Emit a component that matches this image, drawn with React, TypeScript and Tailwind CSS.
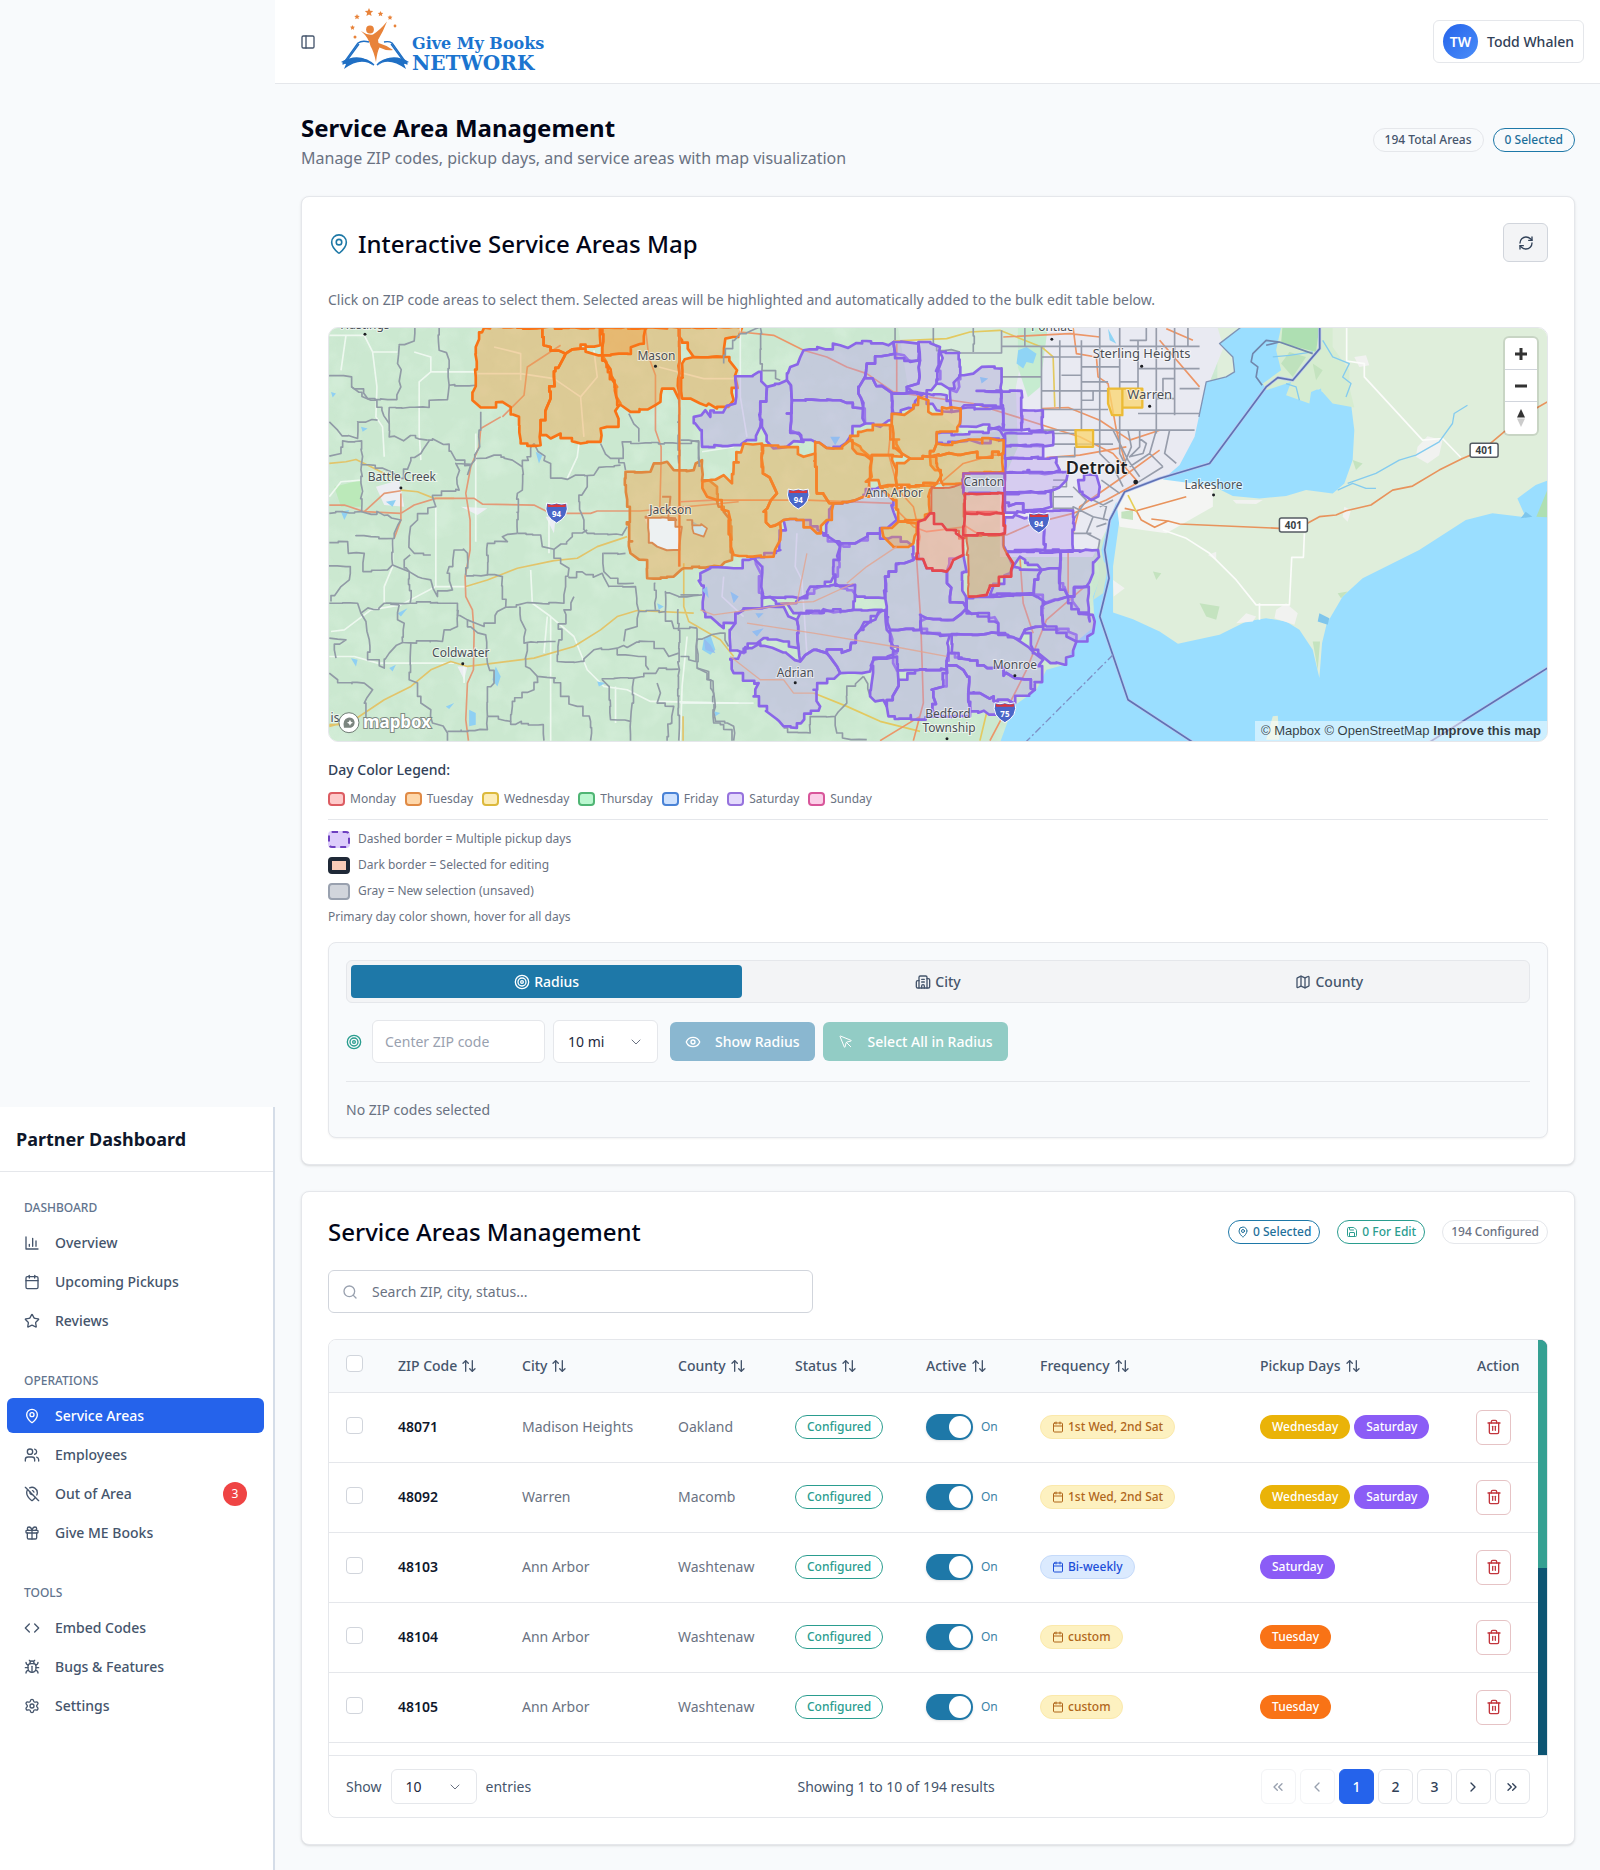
import { useState } from "react";
import type { ElementType, ReactNode } from "react";
import {
    ArrowUpDown,
    Bug,
    Building2,
    Calendar,
    ChevronDown,
    ChevronLeft,
    ChevronRight,
    ChevronsLeft,
    ChevronsRight,
    Code,
    Eye,
    Gift,
    Map as MapIcon,
    MapPin,
    MapPinOff,
    MousePointer,
    PanelLeft,
    RefreshCw,
    Save,
    Search,
    Settings,
    Star,
    Target,
    Trash2,
    Users,
} from "lucide-react";

function ChartIcon({ className }: { className?: string }) {
    return (
        <svg
            viewBox="0 0 24 24"
            fill="none"
            stroke="currentColor"
            strokeWidth="2"
            strokeLinecap="round"
            strokeLinejoin="round"
            className={className}
        >
            <path d="M3 3v18h18M18 17V9M13 17V5M8 17v-3" />
        </svg>
    );
}

interface NavItem {
    label: string;
    icon: ElementType;
    active?: boolean;
    badge?: number;
}

const navGroups: { title: string; items: NavItem[] }[] = [
    {
        title: "Dashboard",
        items: [
            { label: "Overview", icon: ChartIcon },
            { label: "Upcoming Pickups", icon: Calendar },
            { label: "Reviews", icon: Star },
        ],
    },
    {
        title: "Operations",
        items: [
            { label: "Service Areas", icon: MapPin, active: true },
            { label: "Employees", icon: Users },
            { label: "Out of Area", icon: MapPinOff, badge: 3 },
            { label: "Give ME Books", icon: Gift },
        ],
    },
    {
        title: "Tools",
        items: [
            { label: "Embed Codes", icon: Code },
            { label: "Bugs & Features", icon: Bug },
            { label: "Settings", icon: Settings },
        ],
    },
];

const legendDays = [
    { day: "Monday", swatch: "bg-[#fecaca] border-[#dc5c62]" },
    { day: "Tuesday", swatch: "bg-[#fed7aa] border-[#e08a45]" },
    { day: "Wednesday", swatch: "bg-[#fdedb8] border-[#dcb93c]" },
    { day: "Thursday", swatch: "bg-[#bbf7d0] border-[#4fb574]" },
    { day: "Friday", swatch: "bg-[#cfe2fe] border-[#4a83d6]" },
    { day: "Saturday", swatch: "bg-[#e4dafc] border-[#9672dd]" },
    { day: "Sunday", swatch: "bg-[#fbcfe8] border-[#d8569a]" },
];

const dayColors: Record<string, string> = {
    Tuesday: "bg-[#f97316]",
    Wednesday: "bg-[#eab308]",
    Saturday: "bg-[#8b5cf6]",
};

const areas = [
    { zip: "48071", city: "Madison Heights", county: "Oakland", frequency: "1st Wed, 2nd Sat", days: ["Wednesday", "Saturday"] },
    { zip: "48092", city: "Warren", county: "Macomb", frequency: "1st Wed, 2nd Sat", days: ["Wednesday", "Saturday"] },
    { zip: "48103", city: "Ann Arbor", county: "Washtenaw", frequency: "Bi-weekly", days: ["Saturday"] },
    { zip: "48104", city: "Ann Arbor", county: "Washtenaw", frequency: "custom", days: ["Tuesday"] },
    { zip: "48105", city: "Ann Arbor", county: "Washtenaw", frequency: "custom", days: ["Tuesday"] },
];

const columns = [
    { label: "ZIP Code", width: "w-[124px]" },
    { label: "City", width: "w-[156px]" },
    { label: "County", width: "w-[117px]" },
    { label: "Status", width: "w-[131px]" },
    { label: "Active", width: "w-[114px]" },
    { label: "Frequency", width: "w-[220px]" },
    { label: "Pickup Days", width: "w-[217px]" },
];

/* ---------- map ---------- */

type Pt = [number, number];

function parse(points: string): Pt[] {
    return points.split(" ").map((p) => p.split(",").map(Number) as Pt);
}

function noise(a: number, b: number, i: number) {
    const v = Math.sin(a * 12.9898 + b * 78.233 + i * 37.719) * 43758.5453;
    return v - Math.floor(v) - 0.5;
}

// Turns a rough outline into the stepped line of a ZIP boundary. An edge gives
// the same steps in both directions, so neighbours share their border.
function jag(points: string, close = false, amp = 20, step = 19) {
    const pts = parse(points);
    if (close) pts.push(pts[0]);
    let d = `M${pts[0][0]},${pts[0][1]}`;
    for (let i = 1; i < pts.length; i++) {
        let a = pts[i - 1];
        let b = pts[i];
        const flip = a[0] > b[0] || (a[0] === b[0] && a[1] > b[1]);
        if (flip) [a, b] = [b, a];
        const len = Math.hypot(b[0] - a[0], b[1] - a[1]);
        const straight = Math.abs(b[0] - a[0]) < 8 || Math.abs(b[1] - a[1]) < 8;
        const size = straight ? amp / 3 : amp;
        const n = Math.floor(len / step);
        const out: Pt[] = [a];
        let prev = a;
        for (let k = 1; k < n; k++) {
            const t = k / n;
            const x = Math.round(a[0] + (b[0] - a[0]) * t + noise(a[0], b[1], k) * size);
            const y = Math.round(a[1] + (b[1] - a[1]) * t + noise(a[1], b[0], k + 9) * size);
            if (noise(x, y, k) > -0.15) out.push(noise(x, y, k) > 0.18 ? [x, prev[1]] : [prev[0], y]);
            out.push([x, y]);
            prev = [x, y];
        }
        out.push(b);
        if (flip) out.reverse();
        d += out.map((p) => `L${p[0]},${p[1]}`).join("");
    }
    return close ? d + "Z" : d;
}

const westBorders = [
    "235,75 230,130 240,200 200,238 140,235 92,200 92,170 25,165",
    "235,75 280,62 280,20",
    "355,20 355,90 385,120 385,195 465,195",
    "92,200 150,240 205,310 205,350 320,360",
    "385,195 380,238 325,240 325,262 205,262 205,310",
    "320,360 385,372 405,420 450,435 440,465",
    "25,305 50,330 110,355 110,305 170,300",
    "25,408 60,400 65,362 122,362 122,430 210,455 240,475 300,400 325,362",
    "122,430 122,575 200,585 240,600 220,655 150,650 105,645",
    "25,580 122,575",
    "480,275 475,330 462,420 405,430 415,510 335,530 345,560 290,600 265,650 280,700 330,705",
    "465,415 520,405 575,420 605,440 605,510 590,520 590,640",
    "605,440 640,370",
    "640,370 690,430 690,470 740,478 765,465 820,465 835,442 900,435",
    "840,370 870,415 895,415 905,365 975,368 1075,370 1135,362 1135,440",
    "925,280 955,325 955,365",
    "895,415 915,450",
    "800,465 800,500 775,545 790,600 800,640 905,645 920,620",
    "590,640 545,650 560,665 500,670 500,765 435,768",
    "590,640 660,645 665,680 700,688 755,650 800,630",
    "700,688 700,715 745,745 735,800 730,850 620,848 555,862 545,770 500,765",
    "745,770 845,760 865,800 945,800 955,875",
    "760,830 730,870 715,960 710,1025 780,1025 820,990 890,985",
    "850,700 850,755 870,775 940,790",
    "850,700 915,700",
    "25,668 80,665 82,700 130,700 128,755 200,750 215,735 215,655",
    "215,735 265,755 268,850 195,850",
    "268,705 250,720 265,755 330,780 350,830 395,810 385,740 400,690 440,700 435,765",
    "25,735 75,740 85,780 60,800 30,845",
    "25,850 110,850 120,880 190,850 235,855",
    "235,855 230,900 250,910 245,968 365,965 370,930 410,920 410,850 350,848 268,850",
    "120,880 135,905 145,960 140,1020 190,1045 205,1000 245,968",
    "410,870 440,900 490,920 530,875 555,862",
    "440,900 495,945 500,1030 520,1090 500,1130 500,1190",
    "595,862 600,900 615,930 610,970 705,965",
    "620,970 615,1040 650,1070 705,1075",
    "25,955 75,960 40,990 45,1015",
    "25,1060 50,1080 130,1090 155,1110 130,1150 135,1200",
    "270,970 265,1080 290,1090 300,1150 330,1170 335,1210 380,1240 380,1263",
    "500,1190 500,1230 380,1235",
    "500,1190 570,1205 575,1160 640,1110 650,1070",
    "570,1205 665,1215 670,1263",
    "705,1075 720,1130 770,1160 810,1205 810,1263",
    "845,1080 865,1100 870,1200 930,1205 930,1263",
    "845,1080 940,1075 1015,1045 1075,1048",
    "940,1075 935,1150 930,1205",
    "890,985 890,1005 955,1010 985,1050",
    "910,965 915,930 950,920 955,875",
    "890,985 985,965 1045,1010 1075,1000",
    "955,875 1035,875 1035,815 1075,830 1145,825",
    "1035,875 1060,925 1130,925",
    "1075,870 1075,1263",
    "1010,1090 1020,1120 1010,1150 1060,1160 1040,1263",
    "1130,925 1130,1045 1165,1055 1180,1130 1180,1210 1235,1230 1235,1263",
    "1075,205 1075,430",
    "1005,790 1005,870",
];

const midBorders = [
    "130,130 180,40 240,20",
    "240,20 245,150 300,180",
    "0,360 55,365 58,440",
    "0,825 55,825",
    "0,1010 45,1025 50,960 120,940 145,980",
    "50,1045 80,1060 100,1120 105,1200 160,1220 160,1263",
    "310,1225 390,1240 390,1190 465,1190 500,1150 500,1110 550,1070",
    "465,1190 470,1240 560,1260",
    "550,1070 570,1130 620,1160",
    "760,20 770,80 840,95",
    "880,20 880,95",
    "645,60 645,20",
];

const detroitGrid =
    "M838,98H965V30M965,78H1560M965,140V170H1085M1035,20V78M1085,78V330M1085,110H1205M1085,212H1290M1140,60V265M1205,60V330H1340M1260,20V400M1320,20V205M1320,285V400L1340,440M1375,60V205M1430,20V205M1375,280H1560M1430,205V340M1085,330H1545M1485,20V205M1525,20V80M1400,20V60H1350M1205,140H1320M1375,145H1560M1145,165H1205V185H1285M1320,185H1375M1450,175H1485V235H1450ZM1430,235H1485V285M1500,205H1560M1085,268H1285M1240,212V240H1205M1120,340H1185M1120,372H1300M1240,330V380M1185,380V410H1130M1260,400L1300,440 1330,500M1300,330L1345,420 1380,470M1345,330L1355,380 1330,440M1380,330V380L1350,410 1390,400 1400,370 1380,355M1430,330L1410,400 1450,440M1470,330L1455,400 1490,430M1410,400L1350,440M1450,440L1370,490M1120,480H1160V500H1120V565H1180M1180,500L1220,540 1180,600M1120,530H1180M1265,480L1320,520M1180,600V560L1240,590 1220,640 1260,660 1255,690M1180,640H1235M1260,560L1300,540M1240,590L1285,600M1180,690H1255M1240,540L1280,560 1270,600M1250,620L1280,610";

const orangeAreas = [
    "490,22 665,22 665,50 690,80 735,100 700,170 690,235 660,300 660,375 600,360 595,290 545,245 480,262 455,240 465,170 465,80",
    "665,22 840,22 840,75 780,85 735,100 690,80 665,50",
    "735,100 780,85 845,105 890,200 900,250 880,320 840,325 840,365 780,370 720,340 690,355 660,330 660,300 690,235 700,170",
    "845,22 1075,22 1075,235 1060,205 1025,205 1020,245 930,275 890,240 880,180 845,105",
    "845,22 975,22 970,70 895,100 845,105",
    "1075,22 1265,22 1255,50 1215,55 1210,110 1120,110 1085,60",
    "1120,110 1210,110 1250,150 1240,240 1190,265 1110,235 1085,235 1085,130",
];

const midOrange = [
    "190,370 245,370 248,460 290,520 250,575 270,620 300,610 300,660 280,710 160,705 150,600 110,540 80,530 65,485 130,465 155,490 160,440",
    "245,375 320,380 370,410 405,400 410,520 460,550 440,600 410,640 370,600 310,600 270,620 250,575 290,520 248,460",
    "405,365 405,400 410,520 460,550 550,530 575,470 570,410 510,360 460,385",
    "510,360 560,330 630,315 665,400 665,410 620,405 575,420 530,400",
    "635,300 700,265 715,230 745,240 745,275 840,265 840,310 770,340 770,370 750,410 690,415 665,400 640,360",
    "770,370 970,360 970,400 750,410",
    "750,410 970,400 970,455 850,460 850,490 790,495 765,450",
    "575,420 620,405 650,450 650,500 600,500 570,465",
    "650,450 690,415 750,410 785,465 770,490 650,500",
    "600,500 770,490 745,530 750,580 715,600 655,605 640,540",
    "605,625 655,605 710,610 700,670 640,680 610,650",
];

const purpleAreas = [
    "40,290 75,270 90,290 165,250 165,180 235,155 260,200 240,260 240,320 200,360 160,375 65,380 60,330",
    "260,200 320,180 335,240 320,280 330,330 370,365 320,380 280,385 245,320 240,260",
    "370,90 480,75 640,65 645,100 560,130 555,170 535,220 550,265 480,240 420,240 335,240 320,180 330,140",
    "335,240 420,240 480,240 550,265 555,310 510,350 460,385 405,365 330,330 320,280",
    "555,170 560,130 645,100 690,125 720,120 715,190 680,200 730,220 635,218",
    "535,220 555,170 635,218 635,300 600,320 555,310",
    "640,65 715,70 715,120 645,100",
    "715,65 780,80 770,190 740,220 680,200 715,190 720,120",
    "780,95 838,98 838,200 830,215 770,190",
    "635,218 730,220 700,265 640,280",
    "740,220 800,225 815,275 770,270 740,245",
    "838,170 880,160 905,140 965,145 965,260 885,255 815,275 810,225",
    "840,265 970,265 970,330 890,320 840,310",
    "890,212 1025,212 1025,330 970,330 965,215",
    "1025,270 1088,270 1088,330 1025,330",
    "770,340 960,330 975,355 770,370",
    "975,340 1120,335 1120,375 975,378",
    "975,378 1090,375 1090,412 975,415",
    "975,415 1130,412 1140,450 975,458",
    "850,460 975,460 975,520 850,520",
    "975,458 1165,455 1160,480 1095,515 975,520",
    "975,520 1115,515 1115,560 1060,570 975,548",
    "975,548 1060,570 1180,572 1180,690 1095,690 1095,575 975,578",
    "1195,480 1250,465 1260,500 1235,540 1200,515",
    "460,550 550,530 600,500 640,540 650,600 600,640 490,680 430,640",
    "310,600 370,600 430,640 480,680 460,770 360,835 250,830 225,715 300,690",
    "60,760 90,745 160,745 220,715 245,740 245,865 190,870 165,910 130,925 75,880",
    "480,680 600,640 700,680 700,720 615,770 615,835 530,830 465,790 460,720",
    "245,835 320,850 360,835 390,800 525,795 520,870 340,880 320,850",
    "165,910 190,870 245,865 310,860 350,900 355,985 250,955 190,1000 150,980 150,930",
    "350,900 360,880 520,870 605,870 540,930 510,990 440,1000 400,990 360,1025 355,985",
    "150,1020 240,970 360,1025 400,990 440,1000 480,1060 400,1110 420,1160 350,1225 310,1220 220,1130 235,1090 160,1060",
    "440,1000 510,990 540,930 615,870 620,930 650,1000 580,1020 570,1055 480,1060",
    "615,770 700,720 715,700 740,745 800,755 810,830 860,865 820,900 740,895 720,930 630,930 620,860",
    "630,930 720,930 810,945 800,1050 720,1050 650,1050 640,980",
    "580,1020 650,1010 655,1080 620,1160 570,1130",
    "655,1080 720,1050 800,1050 790,1100 755,1110 770,1190 720,1200 625,1190 620,1160",
    "800,1040 850,1050 865,1120 870,1190 770,1190 755,1110 790,1100",
    "720,885 740,895 820,900 860,865 955,910 955,940 810,945 725,940",
    "860,835 960,830 1085,825 1090,920 1035,930 1020,960 955,940 955,910 860,870",
    "815,945 955,940 1020,965 1090,1020 1065,1110 1005,1075 870,1020 815,1000",
    "805,1000 870,1020 1005,1075 1065,1110 1000,1150 865,1120 850,1050 800,1040",
    "865,1120 1000,1150 985,1190 870,1175",
    "1035,930 1090,920 1190,945 1190,965 1155,1035 1100,1020 1060,990",
    "1085,860 1120,840 1165,830 1245,905 1240,940 1190,965 1130,920 1090,910",
    "975,600 1095,575 1095,690 1050,690 980,695 970,640",
    "980,695 1140,695 1140,745 1085,750 1020,710 1000,740",
    "1000,740 1085,750 1050,820 930,825 940,800 990,760",
    "1085,750 1140,745 1165,830 1100,850 1050,820",
    "1140,695 1255,690 1240,760 1220,800 1165,830 1140,770",
    "800,755 850,705 858,830 860,865 810,830",
    "1225,800 1230,905 1165,830",
];

const redAreas = [
    "715,605 750,580 800,630 850,655 850,705 820,720 800,755 740,745 710,700",
    "855,578 970,580 975,640 850,645",
    "855,520 970,520 970,580 855,580",
];

const mixedAreas = [
    "860,645 970,645 980,700 1000,730 980,770 930,800 920,825 865,830",
    "755,500 850,490 855,655 800,630 750,580",
];

function Shield({ x, y, label }: { x: number; y: number; label: string }) {
    return (
        <g transform={`translate(${x} ${y})`}>
            <path
                d="M-10,-9 Q-5,-7 0,-9 Q5,-7 10,-9 Q12,-3 9,3 Q6,8 0,11 Q-6,8 -9,3 Q-12,-3 -10,-9Z"
                fill="#4a66c8"
                stroke="#fff"
                strokeWidth="1"
            />
            <path d="M-9,-8 Q-5,-6 0,-8 Q5,-6 9,-8 V-5 H-9Z" fill="#d8383f" />
            <text y="5" textAnchor="middle" fontSize="8" fontWeight="700" fill="#fff">
                {label}
            </text>
        </g>
    );
}

function RouteSign({ x, y }: { x: number; y: number }) {
    return (
        <g transform={`translate(${x} ${y})`}>
            <rect x="-14" y="-7" width="28" height="14" rx="2" fill="#fff" stroke="#555b63" strokeWidth="1.5" />
            <text y="4" textAnchor="middle" fontSize="10" fontWeight="700" fill="#3a3f45">
                401
            </text>
        </g>
    );
}

function Place({
    x,
    y,
    dot,
    size = 12,
    bold,
    children,
}: {
    x: number;
    y: number;
    dot?: Pt;
    size?: number;
    bold?: boolean;
    children: ReactNode;
}) {
    return (
        <g>
            <text
                x={x}
                y={y}
                textAnchor="middle"
                fontSize={size}
                fontWeight={bold ? 600 : 400}
                fill={bold ? "#1d1f23" : "#4b4f55"}
                stroke="#fff"
                strokeOpacity="0.6"
                strokeWidth="2"
                paintOrder="stroke"
            >
                {children}
            </text>
            {dot && <circle cx={dot[0]} cy={dot[1]} r={bold ? 2.4 : 1.5} fill="#1d1f23" />}
        </g>
    );
}

function ServiceMap() {
    return (
        <svg
            viewBox="0 0 1220 415"
            preserveAspectRatio="xMidYMid slice"
            className="block h-full w-full"
            role="img"
            aria-label="Service areas map"
            fontFamily='"Noto Sans", sans-serif'
        >
            <defs>
                <filter id="terrain" x="0" y="0" width="100%" height="100%">
                    <feTurbulence type="fractalNoise" baseFrequency="0.04" numOctaves="3" seed="4" />
                    <feColorMatrix values="0 0 0 0 0.72  0 0 0 0 0.9  0 0 0 0 0.75  0 2.6 0 0 -1.1" />
                </filter>
                <clipPath id="michigan">
                    <path d="M0,0H890V150L796,162 777,210V415H0Z" />
                </clipPath>
            </defs>

            {/* land */}
            <rect width="1220" height="415" fill="#dfeedb" />
            <g clipPath="url(#michigan)">
                <rect width="940" height="415" fill="#cbe8d0" />
                <rect width="940" height="415" filter="url(#terrain)" opacity="0.4" />
            </g>
            <path d="M570,0H720V60L690,100 640,110 580,60Z" fill="#d7ecdc" />

            {/* detroit metro */}
            <path
                d="M700,0H890L896,20 880,60 870,110 850,150 800,165 780,200 765,230 672,230 672,160 690,120 688,60Z"
                fill="#e9eaf2"
            />
            <path d="M690,0H720L712,60 700,70 690,40Z" fill="#c6ecd0" />

            {/* east: lakes, river and ontario */}
            <g transform="translate(772 -7) scale(0.33333)" strokeLinejoin="round" fill="none">
                <path d="M45,560 75,515 200,470 340,490 340,560 200,640 60,620Z" fill="#f4f5f3" />
                <path
                    d="M425,20 360,70 400,110 405,155 380,170 320,185 298,290 285,350 240,435 190,478 340,498 400,528 480,535 560,528 620,510 700,520 735,490 760,420 765,330 755,250 700,230 640,200 540,120 545,20Z"
                    fill="#9adeff"
                />
                <path
                    d="M545,20H700V80L750,150 750,200 765,262 700,250 660,205 635,215 630,250 560,225 575,185 500,210 490,190 545,150 530,90Z"
                    fill="#d6ecd0"
                />
                <path d="M549,20H660L650,95 545,68Z" fill="#aedfb2" />
                <path d="M570,95 620,110 580,170 545,130Z" fill="#bfe2bd" />
                <path d="M640,215 665,205 668,230 645,235Z" fill="#9adeff" />
                <path
                    d="M50,545 28,600 5,690 15,740 -20,830 -15,920 -70,965 -105,1035 -160,1050 -190,1110 -260,1160 -300,1270 H1350V480L1310,495 1255,535 1280,592 1180,580 1100,600 960,690 790,775 730,830 682,912 668,970 660,1075 640,990 600,930 560,905 500,895 440,905 360,945 235,972 180,935 100,898 40,878 40,740 58,610Z"
                    fill="#9adeff"
                />
                <path d="M1345,510 1312,590 1345,592Z" fill="#aedfb2" />
                <path d="M-10,700 0,770 -20,840 10,820 25,740Z" fill="#cde5cf" />
                <path d="M660,880 690,895 685,915 655,905ZM1280,575 1265,595 1300,590Z" fill="#7fc6ec" />
                <path d="M520,1190 535,1188 540,1260H500Z" fill="#dfeedb" />
                <path
                    d="M955,380 985,348 1030,360 1020,405 985,430 950,410ZM765,110 800,105 810,135 780,140ZM530,870 560,850 595,880 585,915 525,895ZM410,910 440,880 470,890 460,905ZM325,705 350,695 350,720ZM735,560 755,570 745,605 730,590ZM40,780 75,805 42,830ZM400,540 490,540 470,552 410,550Z"
                    fill="#f1f2f0"
                />
                <path
                    d="M760,420 790,430 770,450ZM640,130 670,150 650,180ZM300,850 360,860 350,900 320,890ZM160,755 185,760 170,780ZM715,820 745,815 725,835ZM640,965 662,965 655,1050ZM65,575 100,570 100,600 65,595Z"
                    fill="#c4e3bf"
                />
                <path
                    d="M742,20V122L795,130V170L970,360 1030,355 1085,412M615,640 612,712H577L570,855H470L410,780 330,700 260,655 190,630M480,850V900"
                    stroke="#fbfcfa"
                    strokeWidth="5"
                />
                <path
                    d="M715,510 760,490 800,505 830,505M745,490 830,460 900,420 950,405 1020,365 1060,310 1065,280 1105,255M670,60 700,110 750,130 730,170 755,190 740,230M520,110 570,105 640,95M560,190 590,200 600,240"
                    stroke="#84cbef"
                    strokeWidth="4"
                />
                <path
                    d="M75,565 110,572 260,530M110,572 125,600 165,622 205,603 155,597M205,603 240,612 540,625 620,612 660,590 710,585 740,572 815,555 880,510 940,498 1020,450 1090,415 1150,390 1215,335 1310,265 1345,245"
                    stroke="#e8935c"
                    strokeWidth="5"
                />
                <path d="M85,525 110,575" stroke="#e6cf57" strokeWidth="5" />
                <path d="M425,20 360,70 400,110 405,155 380,170 320,185 298,290" stroke="#7f93b5" strokeWidth="4" />
                <path
                    d="M540,65 500,60 460,100 455,125 475,140 470,170 488,195M500,75 540,65 640,100"
                    stroke="#7187ad"
                    strokeWidth="5"
                />
                <path
                    d="M661,20V85L580,180 535,172 500,200 330,430 180,475 75,515 30,600 15,690 28,775 0,890 85,1140 280,1268M990,1268 1345,1045"
                    stroke="#bcc8ee"
                    strokeWidth="9"
                />
                <path
                    d="M661,20V85L580,180 535,172 500,200 330,430 180,475 75,515 30,600 15,690 28,775 0,890 85,1140 280,1268M990,1268 1345,1045"
                    stroke="#5f72b4"
                    strokeWidth="5"
                />
                <path d="M40,1005 -220,1265" stroke="#7f8fc4" strokeWidth="4" strokeDasharray="22 8 6 8" />
            </g>

            {/* west: county roads and unassigned ZIP borders */}
            <g transform="translate(-8 -7) scale(0.33333)" strokeLinejoin="round" fill="none">
                <path
                    d="M165,500 235,480 250,560 190,555ZM420,560 500,565 470,585ZM675,590 705,590 700,640ZM970,590 1070,590 1075,690 1000,660ZM410,1040 440,1040 430,1080Z"
                    fill="#eceef3"
                />
                <path d="M40,500 120,480 122,560 60,560Z" fill="#bbe9b9" />
                <path
                    d="M25,45H130L155,95H230M155,95 168,200 165,290 185,320 190,410M75,45 60,150M280,95 330,110V155H460M330,155 295,185V340L300,420M465,340V665M345,560V800H440M25,530 60,485 122,480M215,660V740L190,800 190,850M345,800 240,855 150,870 70,930 30,935M685,600V700M740,475 770,410 775,370M630,750 635,850 690,890 760,950 800,1050 850,1100 920,1110 990,1145 1255,1150M680,890 670,1000M690,890 690,1263M885,1100V1210M25,1010 100,1010 170,1030H400M430,1030V1090M1100,950 1085,1100 1080,1263M520,80 600,100 600,180M470,160H600L700,175 780,230 830,170 820,90M780,230 790,350M1015,140 1150,175 1240,175"
                    stroke="#f3faf4"
                    strokeOpacity="0.85"
                    strokeWidth="5"
                />
                <path
                    d="M25,430 75,425 105,418 150,440 210,470M240,510 290,515 340,535 400,535M435,800 500,780 590,745 700,722 770,715 830,680 920,650M25,1220 100,1200 190,1140 270,1100 330,1050 390,1025 440,1040 520,1030 640,1015 760,980 840,930 890,890 950,872 1120,880M1090,730V860L1105,905 1200,960 1240,1010M1088,1190V1263M25,1215H60"
                    stroke="#e2c46a"
                    strokeWidth="5"
                />
                <path
                    d="M25,555 70,555 130,575 240,580 280,555 345,535 460,535 485,552 640,555 690,580 810,580 830,573 960,573 1255,545M130,575 190,520 240,512M540,290 480,325 475,380 450,440 435,520 448,600 448,690 433,770 435,830 455,870 460,940 458,1050 440,1090 435,1200 443,1263M545,290 610,225 620,140 720,75M975,22 985,110 1005,165V330L1022,380V420L1018,573M1075,680 1075,740M240,520 240,600 220,655"
                    stroke="#e39a77"
                    strokeWidth="5"
                />
                <path
                    d="M195,545 225,540 215,560ZM645,395 665,405 655,430ZM230,880 260,865 240,890ZM90,1015 110,1020 105,1040ZM205,1045 225,1035 215,1055ZM525,1040 540,1070 530,1100 515,1080ZM445,1170 465,1180 465,1215 445,1220ZM1150,960 1170,945 1185,990 1170,1005 1145,990ZM830,1085 855,1090 835,1100ZM1010,850 1030,860 1015,870ZM120,320 140,325 125,335ZM60,575 85,570 70,600ZM375,1160 400,1150 385,1168ZM1110,600 1160,630 1140,650ZM30,215 45,220 35,232ZM1180,1175 1200,1180 1185,1190Z"
                    fill="#8fd0f3"
                />
                <g stroke="#919ba6" strokeWidth="5">
                    {westBorders.map((points) => (
                        <path key={points} d={jag(points)} />
                    ))}
                </g>
                <g fill="#f59e3b" fillOpacity="0.4" stroke="#f97316" strokeWidth="8">
                    {orangeAreas.map((points) => (
                        <path key={points} d={jag(points, true)} />
                    ))}
                </g>
                <path
                    d={jag(
                        "915,455 990,455 1000,430 1040,425 1060,450 1120,450 1145,420 1145,480 1190,500 1195,560 1230,600 1235,720 1200,740 1090,745 1060,770 980,775 980,720 930,700 920,560",
                        true,
                    )}
                    fill="#f59e3b"
                    fillOpacity="0.4"
                    stroke="#e0883f"
                    strokeWidth="8"
                />
                <path
                    d={jag("975,590 1065,595 1080,650 1060,690 1010,680 985,640", true)}
                    fill="#edf1f2"
                    stroke="#d98b52"
                    strokeWidth="6"
                />
                <path
                    d={jag("1100,600 1160,625 1150,650 1120,640", true)}
                    fill="#cfe3e6"
                    stroke="#d98b52"
                    strokeWidth="5"
                />
                <path d={jag("1025,530 1050,530 1045,600 1070,600")} stroke="#d98b52" strokeWidth="6" />
                <path d="M1077,22V740" stroke="#f08035" strokeWidth="7" />
            </g>

            {/* centre: assigned pickup areas */}
            <g transform="translate(352 -7) scale(0.33333)" strokeLinejoin="round" fill="none">
                <path
                    d="M1015,90 1040,80 1070,100 1060,130 1040,125 1030,145 1010,130ZM1285,25 1310,70 1290,60Z"
                    fill="#8fd4f5"
                />
                <path
                    d="M180,22V230L200,350M0,1150H220M350,640 345,740 365,780 380,1000M130,770 125,830 190,890M65,395 160,380"
                    stroke="#eff8f2"
                    strokeOpacity="0.8"
                    strokeWidth="5"
                />
                <path
                    d="M640,62 800,55 870,35 960,30 1085,80 1120,110 1125,260M400,1120 500,1160 600,1205 720,1235M920,1180 900,1263"
                    stroke="#e3c95f"
                    strokeWidth="5"
                />
                <path
                    d="M180,35 280,45 370,90 440,110 500,140 560,160 640,215 880,250 1010,290 1120,325 1200,350 1300,400 1370,480M650,70V215M1180,22 1190,100 1250,110 1255,170 1285,190 1310,330 1340,440M970,50 1170,40 1260,50M1085,265 1165,262 1260,300 1350,360 1440,330M1100,412 1200,405 1340,380M635,300 625,400 655,510 700,560 720,650 710,720 722,900 730,1150 700,1263M0,545 100,540 380,540 640,550M600,1263 720,1190M655,505 780,490 850,430 940,405 970,405M640,560 700,620 740,635 860,620 900,645 980,645 1060,610 1180,580 1280,540 1370,490M1020,710 1030,850 1060,940M1215,800 1100,900 1040,1050 1000,1130 930,1263M1165,690V820M1440,390 1330,470 1200,560 1180,640M1460,25 1540,60M1440,60 1560,200"
                    stroke="#ec9668"
                    strokeWidth="5"
                />
                <g stroke="#919ba6" strokeWidth="5">
                    {midBorders.map((points) => (
                        <path key={points} d={jag(points)} />
                    ))}
                    <path d={detroitGrid} stroke="#979dab" />
                </g>
                <g fill="#b99cec" fillOpacity="0.38" stroke="#8a66e8" strokeWidth="8">
                    {purpleAreas.map((points) => (
                        <path key={points} d={jag(points, true)} />
                    ))}
                </g>
                <g fill="#f59e3b" fillOpacity="0.38" stroke="#f5822a" strokeWidth="8">
                    {midOrange.map((points) => (
                        <path key={points} d={jag(points, true)} />
                    ))}
                </g>
                <g fill="#d59a78" fillOpacity="0.55" stroke="#e0724f" strokeWidth="6">
                    {mixedAreas.map((points) => (
                        <path key={points} d={jag(points, true)} />
                    ))}
                </g>
                <g fill="#fb9a90" fillOpacity="0.5" stroke="#e5484d" strokeWidth="8">
                    {redAreas.map((points) => (
                        <path key={points} d={jag(points, true)} />
                    ))}
                </g>
                <path
                    d={jag("980,700 1000,730 980,770 930,800 920,825 865,830")}
                    stroke="#e5484d"
                    strokeWidth="8"
                />
                <path d="M850,520V460H975V578" stroke="#a25cc4" strokeWidth="7" />
                <path
                    d="M1285,205H1328V285H1297L1285,250ZM1328,205H1388V262H1328ZM1187,330H1240V380H1190Z"
                    fill="#fbd56e"
                    fillOpacity="0.75"
                    stroke="#ecbb35"
                    strokeWidth="7"
                />
                <path
                    d="M380,700 350,850 280,860 100,885 60,870M520,790 400,845 300,850M150,1010 240,1080 310,1080 340,1120 400,1120M650,680 560,740 500,790M200,910 400,940 640,980 800,1010"
                    stroke="#e3a48f"
                    strokeOpacity="0.8"
                    strokeWidth="4"
                />
                <path
                    d="M65,810 80,800 85,835ZM150,815 175,830 160,850ZM215,935 250,925 230,950ZM225,880 250,880 235,895ZM70,955 90,975 105,1000 75,990ZM450,350 480,350 465,375ZM900,170 925,175 905,190Z"
                    fill="#93bdf0"
                />
            </g>

            <Shield x={228} y={185} label="94" />
            <Shield x={470} y={171} label="94" />
            <Shield x={711} y={195} label="94" />
            <Shield x={677} y={385} label="75" />
            <RouteSign x={966} y={198} />
            <RouteSign x={1157} y={123} />

            <Place x={36} y={2} dot={[36, 7]}>Hastings</Place>
            <Place x={328} y={33} dot={[327, 39]}>Mason</Place>
            <Place x={73} y={154} dot={[72, 161]}>Battle Creek</Place>
            <Place x={342} y={187}>Jackson</Place>
            <Place x={132} y={330} dot={[134, 337]}>Coldwater</Place>
            <Place x={566} y={170}>Ann Arbor</Place>
            <Place x={656} y={159}>Canton</Place>
            <Place x={467} y={350} dot={[467, 356]}>Adrian</Place>
            <Place x={687} y={342} dot={[687, 349]}>Monroe</Place>
            <Place x={620} y={391}>Bedford</Place>
            <Place x={621} y={405} dot={[619, 412]}>Township</Place>
            <Place x={724} y={4} dot={[724, 12]}>Pontiac</Place>
            <Place x={814} y={31} dot={[814, 39]} size={13}>Sterling Heights</Place>
            <Place x={822} y={72} dot={[822, 79]} size={13}>Warren</Place>
            <Place x={769} y={147} dot={[808, 155]} size={18} bold>Detroit</Place>
            <Place x={886} y={162} dot={[886, 168]}>Lakeshore</Place>
            <Place x={6} y={395}>is</Place>

            {/* map provider mark */}
            <circle cx="20" cy="396" r="10" fill="#fff" stroke="#6f7b74" strokeWidth="1" />
            <path d="M15,401 Q13,393 19,391 A5,5 0 1 1 22,401Z" fill="#7b857f" />
            <path d="M21,393 l1,2 2,1 -2,1 -1,2 -1,-2 -2,-1 2,-1Z" fill="#fff" />
            <text
                x="34"
                y="401"
                fontSize="17"
                fontWeight="700"
                fill="#fff"
                stroke="#7f8b84"
                strokeWidth="2"
                paintOrder="stroke"
            >
                mapbox
            </text>
        </svg>
    );
}

function MapPanel() {
    return (
        <div className="relative mt-[17px] h-[415px] overflow-hidden rounded-[10px] border border-gray-200">
            <ServiceMap />
            <div className="absolute top-2.5 right-2.5 flex w-8 flex-col divide-y divide-gray-300 rounded bg-white shadow-[0_0_0_2px_rgba(0,0,0,0.1)]">
                <button aria-label="Zoom in" className="flex h-8 items-center justify-center">
                    <svg viewBox="0 0 14 14" className="size-3.5" fill="#333">
                        <path d="M5.500 1h3v4.500H13v3H8.500V13h-3V8.500H1v-3h4.500z" />
                    </svg>
                </button>
                <button aria-label="Zoom out" className="flex h-8 items-center justify-center">
                    <svg viewBox="0 0 14 14" className="size-3.5" fill="#333">
                        <path d="M1 5.500h12v3H1z" />
                    </svg>
                </button>
                <button aria-label="Reset bearing to north" className="flex h-8 items-center justify-center">
                    <svg viewBox="0 0 10 20" className="h-5">
                        <path d="M1 9.500 5 1l4 8.500z" fill="#333" />
                        <path d="M1 10.500h8L5 19z" fill="#ccc" />
                    </svg>
                </button>
            </div>
            <div className="absolute right-0 bottom-0 flex gap-1 bg-white/50 px-1.5 font-['Liberation_Sans',Arial,sans-serif] text-[13px] leading-5 text-black/75">
                <a href="#mapbox">© Mapbox</a>
                <a href="#osm">© OpenStreetMap</a>
                <a href="#improve" className="font-bold">
                    Improve this map
                </a>
            </div>
        </div>
    );
}

/* ---------- page ---------- */

function Logo() {
    return (
        <svg viewBox="0 0 204 68" className="h-[68px] w-[204px]" role="img" aria-label="Give My Books Network">
            <g fill="#e8833a">
                <path d="M28,0 l1.200,2.800 3,.2 -2.300,2 .7,3 -2.600,-1.600 -2.600,1.600 .7,-3 -2.300,-2 3,-.2Z" />
                <path d="M16,6 l.8,1.800 2,.2 -1.500,1.300 .5,2 -1.800,-1 -1.800,1 .5,-2 -1.500,-1.300 2,-.2Z" />
                <path d="M39.500,3 l.8,1.800 2,.2 -1.500,1.300 .5,2 -1.800,-1 -1.800,1 .5,-2 -1.500,-1.300 2,-.2Z" />
                <path d="M49,7 l.7,1.600 1.800,.2 -1.300,1.200 .4,1.800 -1.600,-.9 -1.600,.9 .4,-1.800 -1.300,-1.200 1.800,-.2Z" />
                <path d="M11.500,17 l.7,1.600 1.800,.2 -1.300,1.200 .4,1.800 -1.600,-.9 -1.600,.9 .4,-1.800 -1.300,-1.200 1.800,-.2Z" />
                <circle cx="54" cy="18" r="1.400" />
                <circle cx="14" cy="29" r="1.500" />
                <circle cx="29" cy="21.500" r="3.900" />
                <path d="M20,23 Q26,27.500 32,26.500 Q39,22 46,13.500 Q42,24 37,32 L37.500,35 Q45,37 52,42 Q45,43 38.500,39.500 Q36,44 35,54 Q33,44 29.500,38 Q28,30 20,23Z" />
            </g>
            <g fill="none" stroke="#1f6fc4" strokeLinejoin="round">
                <path d="M33,57 Q20,45 2,56 L17,35 Q21,32 28,34" strokeWidth="1.400" />
                <path d="M36,57 Q47,45 66,56 L51,35 Q48,33 43,34" strokeWidth="1.400" />
                <path d="M4,55 L18,36M64,55 L50,36" strokeWidth="1.400" />
            </g>
            <path d="M33,58 Q20,48 3,61 L5,56 0,54 Q20,43 33,58Z" fill="#1f6fc4" />
            <path d="M36,58 Q47,48 65,61 L63,56 68,54 Q49,43 36,58Z" fill="#1f6fc4" />
            <g fill="#1b74cf" fontFamily='"DejaVu Serif", serif' fontWeight="700">
                <text x="71" y="41" fontSize="16">
                    Give My Books
                </text>
                <text x="71" y="62" fontSize="20">
                    NETWORK
                </text>
            </g>
        </svg>
    );
}

function Sidebar() {
    return (
        <aside className="flex w-[275px] shrink-0 items-end">
            <div className="h-[764px] w-full border-r-2 border-slate-300/80 bg-white">
                <h2 className="flex h-[65px] items-center border-b border-gray-200 px-4 text-lg font-bold text-slate-900">
                    Partner Dashboard
                </h2>
                <nav className="flex flex-col gap-[33px] pt-[26px] pr-[9px] pl-[7px]">
                    {navGroups.map((group) => (
                        <div key={group.title}>
                            <h3 className="mb-[7px] px-[17px] text-xs leading-5 font-medium text-slate-500 uppercase">
                                {group.title}
                            </h3>
                            <ul className="flex flex-col gap-1">
                                {group.items.map(({ label, icon: Icon, active, badge }) => (
                                    <li key={label}>
                                        <a
                                            href="#nav"
                                            className={`flex h-[35px] items-center gap-[15px] rounded-md px-[17px] text-sm font-medium ${
                                                active ? "bg-[#2563eb] text-white" : "text-slate-600"
                                            }`}
                                        >
                                            <Icon className="size-4" />
                                            {label}
                                            {badge && (
                                                <span className="ml-auto flex size-6 items-center justify-center rounded-full bg-[#ef4444] text-xs font-normal text-white">
                                                    {badge}
                                                </span>
                                            )}
                                        </a>
                                    </li>
                                ))}
                            </ul>
                        </div>
                    ))}
                </nav>
            </div>
        </aside>
    );
}

function Pill({
    className,
    compact,
    children,
}: {
    className: string;
    compact?: boolean;
    children: ReactNode;
}) {
    return (
        <span
            className={`inline-flex h-6 items-center gap-1 rounded-full border text-xs font-medium whitespace-nowrap ${
                compact ? "px-2" : "px-[11px]"
            } ${className}`}
        >
            {children}
        </span>
    );
}

function SelectBox({
    label,
    className,
    options,
}: {
    label: string;
    className: string;
    options: string[];
}) {
    return (
        <span className={`relative block ${className}`}>
            <select
                aria-label={label}
                className="h-full w-full appearance-none rounded-md border border-gray-200 bg-white px-3.5 text-sm text-slate-800"
            >
                {options.map((o) => (
                    <option key={o}>{o}</option>
                ))}
            </select>
            <ChevronDown
                className="pointer-events-none absolute top-1/2 right-3.5 size-4 -translate-y-1/2 text-gray-500"
                strokeWidth={1.5}
            />
        </span>
    );
}

function MapCard() {
    const [tab, setTab] = useState("Radius");
    const tabs = [
        { name: "Radius", icon: Target },
        { name: "City", icon: Building2 },
        { name: "County", icon: MapIcon },
    ];

    return (
        <section className="rounded-lg border border-gray-200 bg-white p-[26px] shadow-sm">
            <div className="flex items-start justify-between">
                <h2 className="flex items-center gap-2 text-2xl leading-[42px] font-medium text-slate-950">
                    <MapPin className="size-[22px] text-[#1d78a6]" strokeWidth={1.75} />
                    Interactive Service Areas Map
                </h2>
                <button
                    aria-label="Refresh map"
                    className="flex h-[39px] w-[45px] items-center justify-center rounded-md border border-gray-300 bg-gray-100 text-slate-700"
                >
                    <RefreshCw className="size-4" />
                </button>
            </div>
            <p className="mt-[25px] text-sm leading-5 text-gray-500">
                Click on ZIP code areas to select them. Selected areas will be highlighted and
                automatically added to the bulk edit table below.
            </p>
            <MapPanel />

            <h3 className="mt-[18px] text-sm leading-5 font-medium text-slate-700">Day Color Legend:</h3>
            <ul className="mt-[11px] flex flex-wrap gap-[9px] border-b border-gray-200 pb-3">
                {legendDays.map(({ day, swatch }) => (
                    <li key={day} className="flex items-center gap-[5px] text-xs text-gray-500">
                        <span className={`h-3.5 w-[17px] rounded border-2 ${swatch}`} />
                        {day}
                    </li>
                ))}
            </ul>
            <ul className="mt-1.5 flex flex-col text-xs leading-[26px] text-gray-500">
                <li className="flex items-center gap-2">
                    <span className="h-[17px] w-[22px] rounded border-2 border-dashed border-[#6d3fc0] bg-[#ddcdfb]" />
                    Dashed border = Multiple pickup days
                </li>
                <li className="flex items-center gap-2">
                    <span className="h-[17px] w-[22px] rounded border-4 border-[#1f2937] bg-[#f9cdb9]" />
                    Dark border = Selected for editing
                </li>
                <li className="flex items-center gap-2">
                    <span className="h-[17px] w-[22px] rounded border-2 border-gray-400 bg-gray-300" />
                    Gray = New selection (unsaved)
                </li>
                <li>Primary day color shown, hover for all days</li>
            </ul>

            <div className="mt-3 rounded-lg border border-gray-200 bg-slate-50 p-[17px] shadow-xs">
                <div className="flex h-[43px] rounded-md border border-gray-200 bg-gray-100 p-1">
                    {tabs.map(({ name, icon: Icon }) => (
                        <button
                            key={name}
                            onClick={() => setTab(name)}
                            className={`flex flex-1 items-center justify-center gap-1 rounded text-sm font-medium ${
                                tab === name ? "bg-[#1e78a8] text-white" : "text-slate-600"
                            }`}
                        >
                            <Icon className="size-4" />
                            {name}
                        </button>
                    ))}
                </div>
                <div className="mt-[17px] flex items-center gap-2 border-b border-gray-200 pb-[18px]">
                    <Target className="mr-0.5 size-4 text-[#2a9d8f]" />
                    <input
                        aria-label="Center ZIP code"
                        placeholder="Center ZIP code"
                        className="h-[43px] w-[173px] rounded-md border border-gray-200 bg-white px-3 text-sm placeholder:text-gray-400"
                    />
                    <SelectBox label="Radius distance" className="h-[43px] w-[105px]" options={["10 mi", "25 mi"]} />
                    <button className="ml-1 flex h-[39px] items-center gap-3.5 rounded-md bg-[#8ab7d0] px-[15px] text-sm font-medium text-white">
                        <Eye className="size-4" />
                        Show Radius
                    </button>
                    <button className="flex h-[39px] items-center gap-3.5 rounded-md bg-[#92ccc5] px-[15px] text-sm font-medium text-white">
                        <MousePointer className="size-4" strokeWidth={1.5} />
                        Select All in Radius
                    </button>
                </div>
                <p className="mt-[18px] text-sm leading-5 text-gray-500">No ZIP codes selected</p>
            </div>
        </section>
    );
}

function AreasTable() {
    const [inactive, setInactive] = useState<string[]>([]);
    const [page, setPage] = useState(1);

    const toggle = (zip: string) =>
        setInactive((list) => (list.includes(zip) ? list.filter((z) => z !== zip) : [...list, zip]));

    const pageButton = "flex size-[35px] items-center justify-center rounded-md border text-sm font-medium";

    return (
        <section className="rounded-lg border border-gray-200 bg-white p-[26px] shadow-sm">
            <div className="flex items-center justify-between">
                <h2 className="text-2xl leading-7 font-medium text-slate-950">Service Areas Management</h2>
                <div className="flex gap-[17px]">
                    <Pill compact className="border-[#1e78a8] text-[#1e6f9a]">
                        <MapPin className="size-3" />0 Selected
                    </Pill>
                    <Pill compact className="border-[#2a9d8f] text-[#2a9d8f]">
                        <Save className="size-3" />0 For Edit
                    </Pill>
                    <Pill compact className="border-gray-200 text-gray-500">
                        194 Configured
                    </Pill>
                </div>
            </div>

            <label className="relative mt-6 block max-w-[485px]">
                <Search className="absolute top-1/2 left-3.5 size-4 -translate-y-1/2 text-gray-400" />
                <input
                    aria-label="Search areas"
                    placeholder="Search ZIP, city, status..."
                    className="h-[43px] w-full rounded-md border border-gray-300 bg-white pr-3 pl-[43px] text-sm placeholder:text-gray-500"
                />
            </label>

            <div className="mt-[26px] overflow-hidden rounded-lg border border-gray-200">
                <div className="flex h-[415px] overflow-hidden">
                    <div className="min-w-0 flex-1 overflow-hidden">
                        <table className="w-full table-fixed text-left text-sm">
                            <thead className="bg-slate-50 text-slate-600">
                                <tr className="h-[52px] border-b border-gray-200">
                                    <th className="w-[52px] pl-[17px]">
                                        <input
                                            type="checkbox"
                                            aria-label="Select all"
                                            className="mb-1 block size-[17px] appearance-none rounded border border-gray-300 bg-white"
                                        />
                                    </th>
                                    {columns.map(({ label, width }) => (
                                        <th key={label} className={`${width} pl-[17px] font-medium`}>
                                            <button className="flex items-center gap-1">
                                                {label}
                                                <ArrowUpDown className="size-4" />
                                            </button>
                                        </th>
                                    ))}
                                    <th className="w-[79px] pl-[17px] font-medium">Action</th>
                                </tr>
                            </thead>
                            <tbody>
                                {areas.map((area) => {
                                    const on = !inactive.includes(area.zip);
                                    return (
                                        <tr key={area.zip} className="h-[70px] border-b border-gray-200 text-gray-500">
                                            <td className="pl-[17px]">
                                                <input
                                                    type="checkbox"
                                                    aria-label={`Select ${area.zip}`}
                                                    className="mb-1 block size-[17px] appearance-none rounded border border-gray-300 bg-white"
                                                />
                                            </td>
                                            <td className="pl-[17px] font-semibold text-slate-900">{area.zip}</td>
                                            <td className="pl-[17px]">{area.city}</td>
                                            <td className="pl-[17px]">{area.county}</td>
                                            <td className="pl-[17px]">
                                                <Pill className="border-[#2a9d8f] text-[#2a9d8f]">Configured</Pill>
                                            </td>
                                            <td className="pl-[17px]">
                                                <div className="flex items-center gap-2">
                                                    <button
                                                        role="switch"
                                                        aria-checked={on}
                                                        aria-label={`${area.zip} active`}
                                                        onClick={() => toggle(area.zip)}
                                                        className={`flex h-[26px] w-[47px] items-center rounded-full p-0.5 shadow-sm ${
                                                            on ? "justify-end bg-[#1e78a8]" : "bg-gray-300"
                                                        }`}
                                                    >
                                                        <span className="size-[22px] rounded-full bg-white" />
                                                    </button>
                                                    <span className="text-xs text-[#3b82a6]">{on ? "On" : "Off"}</span>
                                                </div>
                                            </td>
                                            <td className="pl-[17px]">
                                                <Pill
                                                    className={
                                                        area.frequency === "Bi-weekly"
                                                            ? "border-[#c5dafa] bg-[#dbeafe] text-[#1d4ed8]"
                                                            : "border-[#fbe9ab] bg-[#fdf1c0] text-[#b0671b]"
                                                    }
                                                >
                                                    <Calendar className="size-3" />
                                                    {area.frequency}
                                                </Pill>
                                            </td>
                                            <td className="pl-[17px]">
                                                <div className="flex gap-1">
                                                    {area.days.map((day) => (
                                                        <Pill key={day} className={`border-transparent text-white ${dayColors[day]}`}>
                                                            {day}
                                                        </Pill>
                                                    ))}
                                                </div>
                                            </td>
                                            <td className="pl-4">
                                                <button
                                                    aria-label={`Delete ${area.zip}`}
                                                    className="flex size-[35px] items-center justify-center rounded-md border border-[#e6c3c5] text-[#c2353c]"
                                                >
                                                    <Trash2 className="size-4" />
                                                </button>
                                            </td>
                                        </tr>
                                    );
                                })}
                            </tbody>
                        </table>
                    </div>
                    <div className="w-[9px] bg-[#0d5573]">
                        <div className="h-[55%] bg-[#35a092]" />
                    </div>
                </div>
                <div className="flex items-center justify-between border-t border-gray-200 px-[17px] py-[13px] text-sm text-slate-600">
                    <div className="flex items-center gap-[9px]">
                        Show
                        <SelectBox label="Entries per page" className="h-[35px] w-[86px]" options={["10", "25", "50"]} />
                        entries
                    </div>
                    <p>Showing 1 to 10 of 194 results</p>
                    <div className="flex gap-1">
                        <button disabled aria-label="First page" className={`${pageButton} border-gray-100 text-gray-400`}>
                            <ChevronsLeft className="size-4" />
                        </button>
                        <button disabled aria-label="Previous page" className={`${pageButton} border-gray-100 text-gray-400`}>
                            <ChevronLeft className="size-4" />
                        </button>
                        {[1, 2, 3].map((n) => (
                            <button
                                key={n}
                                onClick={() => setPage(n)}
                                className={`${pageButton} ${
                                    page === n
                                        ? "border-[#2563eb] bg-[#2563eb] text-white"
                                        : "border-gray-200 text-slate-700"
                                }`}
                            >
                                {n}
                            </button>
                        ))}
                        <button aria-label="Next page" className={`${pageButton} border-gray-200 text-slate-700`}>
                            <ChevronRight className="size-4" />
                        </button>
                        <button aria-label="Last page" className={`${pageButton} border-gray-200 text-slate-700`}>
                            <ChevronsRight className="size-4" />
                        </button>
                    </div>
                </div>
            </div>
        </section>
    );
}

export default function App() {
    return (
        <div className="flex min-h-screen bg-slate-50 font-['Noto_Sans','Open_Sans',sans-serif] text-slate-900">
            <Sidebar />
            <div className="min-w-0 flex-1">
                <header className="flex h-[84px] items-center justify-between border-b border-gray-200 bg-white pr-4 pl-6">
                    <div className="flex items-center gap-6">
                        <button aria-label="Toggle sidebar" className="p-px text-slate-600">
                            <PanelLeft className="size-4" />
                        </button>
                        <Logo />
                    </div>
                    <button className="flex h-[43px] items-center gap-[9px] rounded-md border border-gray-200 bg-white px-[9px] text-sm font-medium text-slate-700">
                        <span className="flex size-[35px] items-center justify-center rounded-full bg-gradient-to-br from-[#2563eb] to-[#4b8df8] font-semibold text-white">
                            TW
                        </span>
                        Todd Whalen
                    </button>
                </header>
                <main className="flex flex-col gap-[26px] py-[26px] pr-[25px] pl-[26px]">
                    <div className="flex items-center justify-between">
                        <div>
                            <h1 className="text-2xl leading-9 font-bold text-slate-950">
                                Service Area Management
                            </h1>
                            <p className="text-base leading-6 text-gray-500">
                                Manage ZIP codes, pickup days, and service areas with map visualization
                            </p>
                        </div>
                        <div className="flex gap-[9px]">
                            <Pill className="border-gray-200 text-slate-600">194 Total Areas</Pill>
                            <Pill className="border-[#1e78a8] text-[#1e6f9a]">0 Selected</Pill>
                        </div>
                    </div>
                    <MapCard />
                    <AreasTable />
                </main>
            </div>
        </div>
    );
}
